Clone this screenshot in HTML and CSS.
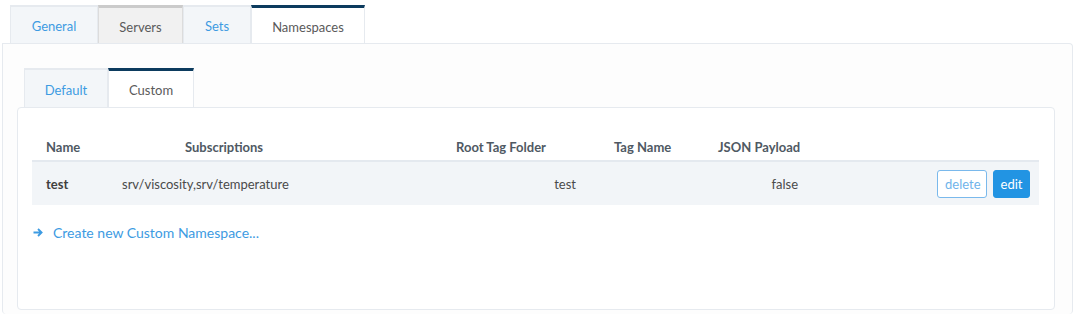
FILE: index.html
```html
<!DOCTYPE html>
<html lang="en">
<head>
    <meta charset="UTF-8">
    <title>Namespaces</title>
    <link rel="stylesheet" href="styles.css">
</head>
<body>
    <div class="tabs outer-tabs">
        <div class="tab link">General</div>
        <div class="tab grey">Servers</div>
        <div class="tab link">Sets</div>
        <div class="tab active">Namespaces</div>
    </div>
    <div class="panel outer-panel">
        <div class="tabs inner-tabs">
            <div class="tab link">Default</div>
            <div class="tab active">Custom</div>
        </div>
        <div class="panel inner-panel">
            <div class="grid head">
                <div class="c1">Name</div>
                <div class="c2 center">Subscriptions</div>
                <div class="c3">Root Tag Folder</div>
                <div class="c4">Tag Name</div>
                <div class="c5">JSON Payload</div>
                <div class="c6"></div>
            </div>
            <div class="grid row">
                <div class="c1 bold">test</div>
                <div class="c2">srv/viscosity,srv/temperature</div>
                <div class="c3 right">test</div>
                <div class="c4"></div>
                <div class="c5 right">false</div>
                <div class="c6 actions">
                    <button class="btn outline">delete</button>
                    <button class="btn solid">edit</button>
                </div>
            </div>
            <a class="create" href="#">
                <svg class="arrow" width="10" height="9" viewBox="0 0 10 9">
                    <path d="M0.5 4.5H8.5M5 1L8.6 4.5L5 8" fill="none" stroke="#3d9be2" stroke-width="1.8"/>
                </svg>Create new Custom Namespace...</a>
        </div>
    </div>
</body>
</html>
```

FILE: styles.css
```css
body {
    margin: 0;
    padding: 5px 1px 0 2px;
    font-family: Lato, "Open Sans", sans-serif;
    font-size: 13px;
    color: #4a4a4a;
    background: #fff;
}

.tabs {
    display: flex;
    height: 38px;
}

.outer-tabs {
    padding-left: 8px;
}

.inner-tabs {
    padding-left: 21px;
    height: 39px;
}

.tab {
    display: flex;
    align-items: center;
    justify-content: center;
    box-sizing: border-box;
    padding-top: 2px;
    border: 1px solid #e6eaef;
    border-bottom: none;
    border-top-width: 2px;
    background: #f3f6f9;
    color: #5a5a5a;
}

.tab.link {
    color: #3d9be2;
}

.tab.grey {
    background: #f1f1f1;
    border-top: 3px solid #cbcbcb;
    border-left-color: #dcdcdc;
    border-right-color: #dcdcdc;
}

.tab.active {
    background: #fff;
    border-top: 3px solid #0c3b5e;
}

.outer-tabs .tab:nth-child(1) { width: 88px; }
.outer-tabs .tab:nth-child(2) { width: 85px; }
.outer-tabs .tab:nth-child(3) { width: 68px; }
.outer-tabs .tab:nth-child(4) { width: 114px; }

.inner-tabs .tab:nth-child(1) { width: 84px; }
.inner-tabs .tab:nth-child(2) { width: 86px; }

.panel {
    border: 1px solid #e6eaef;
    border-radius: 4px;
}

.outer-panel {
    box-sizing: border-box;
    border-bottom: none;
    border-top-left-radius: 0;
    padding-top: 24px;
    height: 271px;
    background: #fdfdfd;
}

.inner-panel {
    margin: 0 17px 0 14px;
    height: 203px;
    box-sizing: border-box;
    padding: 23px 15px 0 14px;
    background: #fff;
}

.grid {
    display: grid;
    grid-template-columns: 76px 232px 250px 110px 112px 1fr;
    align-items: center;
}

.head {
    height: 31px;
    padding-top: 2px;
    box-sizing: border-box;
    border-bottom: 2px solid #e4e9ef;
    font-weight: bold;
    color: #4f5963;
}

.head .c1 { padding-left: 14px; }
.head .c3 { padding-left: 116px; }
.head .c4 { padding-left: 24px; }
.head .c5 { padding-left: 18px; }

.center { text-align: center; }

.row {
    height: 43px;
    background: #f2f5f8;
}

.row .c1 { padding-left: 14px; }
.row .c2 { padding-left: 14px; }
.row .c3 { padding-right: 14px; }
.row .c5 { padding-right: 14px; }

.bold {
    font-weight: bold;
    color: #3f3f3f;
}

.right { text-align: right; }

.actions {
    display: flex;
    justify-content: flex-end;
    gap: 6px;
    padding-right: 9px;
}

.btn {
    font-family: inherit;
    font-size: 13px;
    height: 28px;
    border-radius: 3px;
    padding: 0 7px;
    cursor: pointer;
}

.btn.outline {
    width: 50px;
    background: #fff;
    color: #6fb3ea;
    border: 1px solid #7ab9ec;
}

.btn.solid {
    width: 37px;
    padding: 0;
    background: #2294e3;
    color: #fff;
    border: 1px solid #2294e3;
}

.create {
    display: inline-flex;
    align-items: center;
    margin-top: 19px;
    margin-left: 1px;
    font-size: 14px;
    color: #3d9be2;
    text-decoration: none;
}

.arrow {
    margin-right: 10px;
}
```
